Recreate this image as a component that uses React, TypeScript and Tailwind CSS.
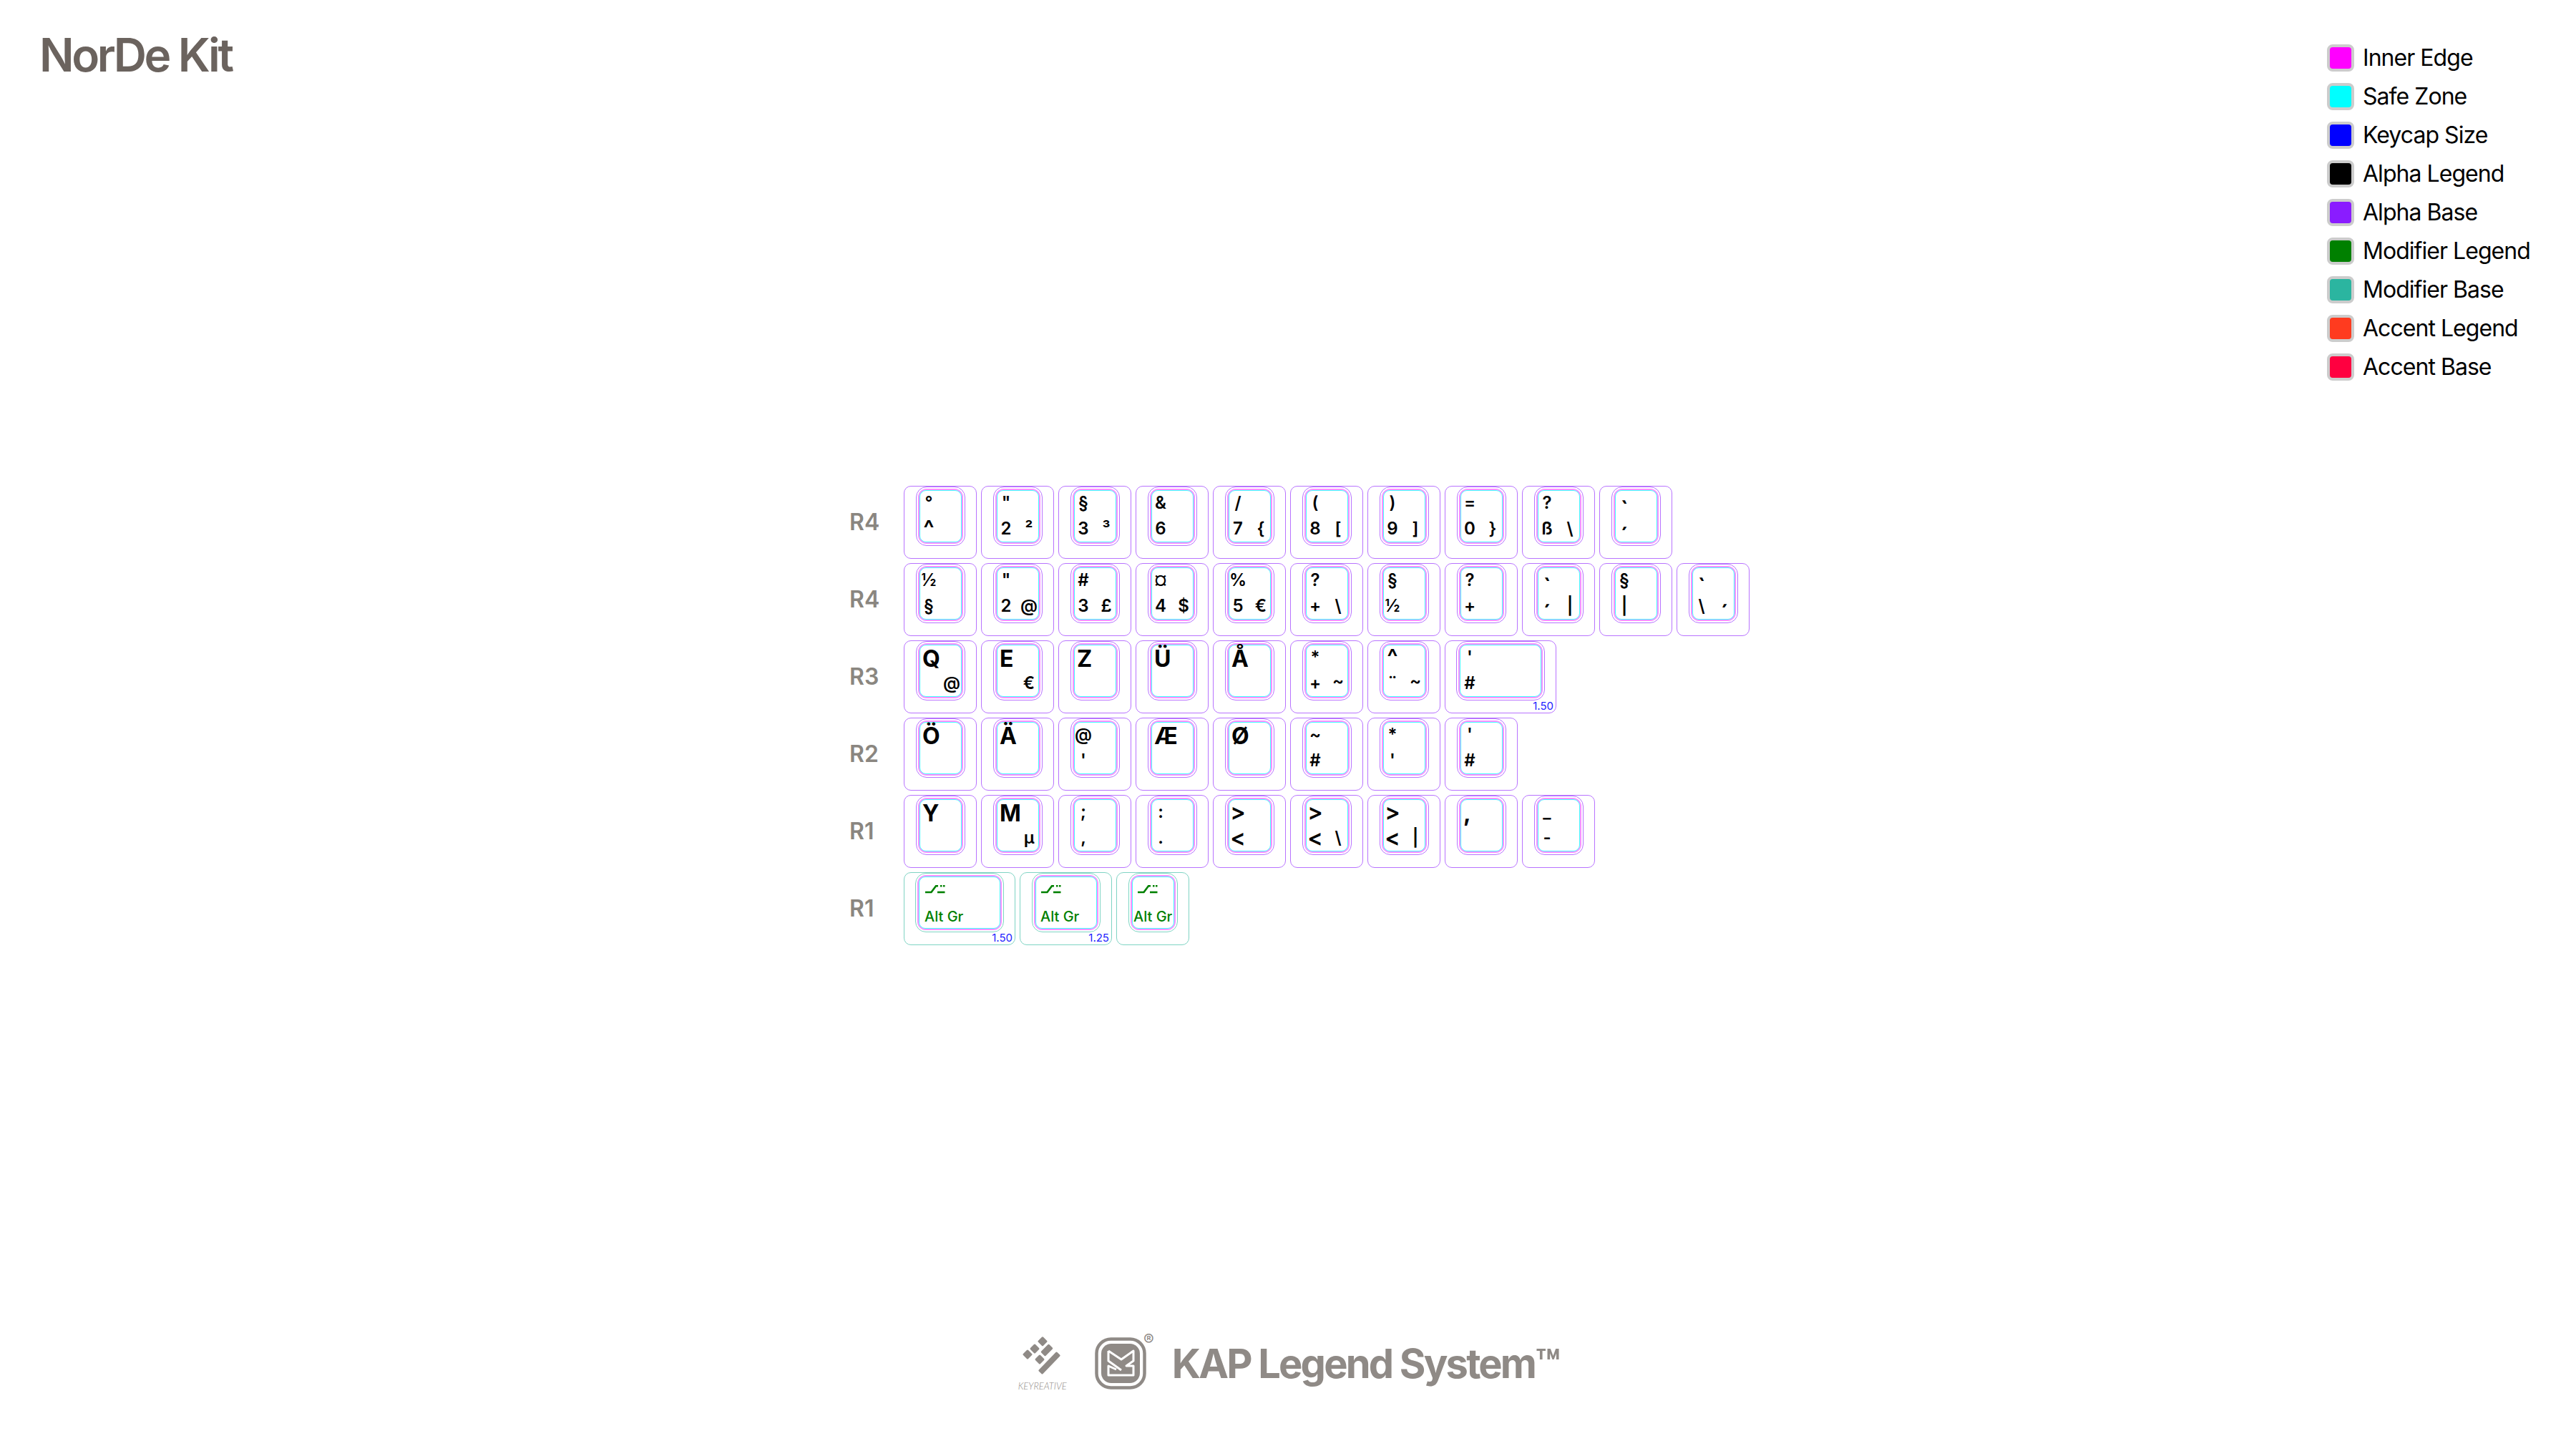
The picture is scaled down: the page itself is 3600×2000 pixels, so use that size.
const LEGEND = [
  { name: "Inner Edge", color: "bg-[#ff00ff]" },
  { name: "Safe Zone", color: "bg-[#00ffff]" },
  { name: "Keycap Size", color: "bg-[#0000ff]" },
  { name: "Alpha Legend", color: "bg-[#000000]" },
  { name: "Alpha Base", color: "bg-[#8a1cff]" },
  { name: "Modifier Legend", color: "bg-[#008000]" },
  { name: "Modifier Base", color: "bg-[#2bb5a0]" },
  { name: "Accent Legend", color: "bg-[#ff3b1f]" },
  { name: "Accent Base", color: "bg-[#ff0040]" },
];

interface KeyDef {
  alpha?: string;
  tl?: string;
  bl?: string;
  tr?: string;
  br?: string;
  size?: "1.50" | "1.25";
  mod?: boolean;
}

const ROWS: { label: string; keys: KeyDef[] }[] = [
  {
    label: "R4",
    keys: [
      { tl: "°", bl: "^" },
      { tl: '"', bl: "2", tr: "²" },
      { tl: "§", bl: "3", tr: "³" },
      { tl: "&", bl: "6" },
      { tl: "/", bl: "7", br: "{" },
      { tl: "(", bl: "8", br: "[" },
      { tl: ")", bl: "9", br: "]" },
      { tl: "=", bl: "0", br: "}" },
      { tl: "?", bl: "ß", br: "\\" },
      { tl: "`", bl: "´" },
    ],
  },
  {
    label: "R4",
    keys: [
      { tl: "½", bl: "§" },
      { tl: '"', bl: "2", br: "@" },
      { tl: "#", bl: "3", br: "£" },
      { tl: "¤", bl: "4", br: "$" },
      { tl: "%", bl: "5", br: "€" },
      { tl: "?", bl: "+", br: "\\" },
      { tl: "§", bl: "½" },
      { tl: "?", bl: "+" },
      { tl: "`", bl: "´", br: "|" },
      { tl: "§", bl: "|" },
      { tl: "`", bl: "\\", br: "´" },
    ],
  },
  {
    label: "R3",
    keys: [
      { alpha: "Q", br: "@" },
      { alpha: "E", br: "€" },
      { alpha: "Z" },
      { alpha: "Ü" },
      { alpha: "Å" },
      { tl: "*", bl: "+", tr: "~" },
      { tl: "^", bl: "¨", tr: "~" },
      { tl: "'", bl: "#", size: "1.50" },
    ],
  },
  {
    label: "R2",
    keys: [
      { alpha: "Ö" },
      { alpha: "Ä" },
      { tl: "@", bl: "'" },
      { alpha: "Æ" },
      { alpha: "Ø" },
      { tl: "~", bl: "#" },
      { tl: "*", bl: "'" },
      { tl: "'", bl: "#" },
    ],
  },
  {
    label: "R1",
    keys: [
      { alpha: "Y" },
      { alpha: "M", br: "µ" },
      { tl: ";", bl: "," },
      { tl: ":", bl: "." },
      { tl: ">", bl: "<" },
      { tl: ">", bl: "<", br: "\\" },
      { tl: ">", bl: "<", br: "|" },
      { alpha: "," },
      { tl: "_", bl: "-" },
    ],
  },
  {
    label: "R1",
    keys: [
      { mod: true, size: "1.50" },
      { mod: true, size: "1.25" },
      { mod: true },
    ],
  },
];

// these glyphs sit larger in the reference than plain 24px Inter
const BIG = ["^", "<", ">", "´", "`"];

function glyphSize(ch: string) {
  return BIG.includes(ch) ? "text-[32px]" : "text-[24px]";
}

function AltGlyph() {
  return (
    <svg width="28" height="13" viewBox="0 0 28 13" fill="none" stroke="#008000" strokeWidth="2.6" className="absolute left-[29px] top-[16px]">
      <path d="M0 11H8.5L15 2.2H18" />
      <path d="M17 11H27.5" />
      <path d="M21 2.2H23.5M25 2.2H27.5" />
    </svg>
  );
}

function Key({ k }: { k: KeyDef }) {
  const outerWidth = k.size === "1.50" ? "w-[156px]" : k.size === "1.25" ? "w-[129px]" : "w-[102px]";
  const capWidth = k.size === "1.50" ? "w-[124px]" : k.size === "1.25" ? "w-[96px]" : "w-[69px]";
  const line = k.mod ? "border-[#7fd4c4]" : "border-[#b873ff]";
  return (
    <div className={`relative shrink-0 h-[102px] ${outerWidth} flex justify-center rounded-[10px] border ${line}`}>
      {/* cap, inner edge and safe zone outlines */}
      <div className={`h-[83px] ${capWidth} rounded-[15px] border ${line} p-[2px]`}>
        <div className="size-full rounded-[12px] border-2 border-[#ff90ff]">
          <div className="size-full rounded-[9px] border border-[#40ffff]" />
        </div>
      </div>

      {k.alpha && <span className="absolute left-[25px] top-[6px] text-[32px] leading-[38px] font-bold text-black">{k.alpha}</span>}
      {k.tl && <span className={`absolute left-[34px] ${k.tl === "`" ? "top-[33px]" : "top-[23px]"} -translate-x-1/2 -translate-y-1/2 ${glyphSize(k.tl)} leading-[20px] font-semibold text-black`}>{k.tl}</span>}
      {k.bl && <span className={`absolute left-[34px] ${k.bl === "´" ? "top-[70px]" : "top-[59px]"} -translate-x-1/2 -translate-y-1/2 ${glyphSize(k.bl)} leading-[20px] font-semibold text-black`}>{k.bl}</span>}
      {k.tr && <span className={`absolute left-[66px] ${k.tr === "~" ? "top-[56px]" : "top-[59px]"} -translate-x-1/2 -translate-y-1/2 text-[24px] leading-[20px] font-semibold text-black`}>{k.tr}</span>}
      {k.br && <span className={`absolute left-[66px] ${k.br === "´" ? "top-[70px]" : "top-[59px]"} -translate-x-1/2 -translate-y-1/2 ${glyphSize(k.br)} leading-[20px] font-semibold text-black`}>{k.br}</span>}

      {k.mod && (
        <>
          <AltGlyph />
          <span className={`absolute top-[49px] text-[20px] leading-[24px] font-medium text-[#008000] ${k.size ? "left-[28px]" : "left-[23px]"}`}>Alt Gr</span>
        </>
      )}
      {k.size && <span className="absolute right-[3px] bottom-0 text-[15px] leading-[18px] text-[#2222ff]">{k.size}</span>}
    </div>
  );
}

function KeyreativeMark() {
  return (
    <svg width="56" height="56" viewBox="0 0 56 56" fill="#8f8a86">
      <rect x="23" y="1.7" width="10" height="10" rx="1.5" transform="rotate(45 28 6.7)" />
      <rect x="12" y="12" width="10" height="10" rx="1.5" transform="rotate(45 17 17)" />
      <rect x="2" y="20" width="10" height="10" rx="1.5" transform="rotate(45 7 25)" />
      <rect x="19" y="27" width="10" height="10" rx="1.5" transform="rotate(45 24 32)" />
      <rect x="26" y="14.5" width="16" height="9" rx="1.5" transform="rotate(-45 34 19)" />
      <rect x="19" y="33" width="37" height="8" rx="1.5" transform="rotate(-46 37.5 37)" />
    </svg>
  );
}

function KapMark() {
  return (
    <svg width="72" height="73" viewBox="0 0 72 73" fill="none">
      <rect x="2.5" y="2.5" width="67" height="68" rx="20" stroke="#8f8a86" strokeWidth="4.5" />
      <rect x="9" y="9" width="54" height="55" rx="14" fill="#8f8a86" />
      <path d="M19 19L37 31L54 19V33L44 40H54V53H19V40L30 45M19 19V33L37 46" stroke="white" strokeWidth="3" strokeLinejoin="round" />
    </svg>
  );
}

export default function App() {
  return (
    <div className="w-[3600px] h-[2000px] bg-white font-['Inter',sans-serif] overflow-hidden">
      {/* Title and colour key */}
      <header className="flex items-start justify-between h-[679px]">
        <h1 className="pl-[55px] pt-[39px] text-[64px] leading-[76px] font-semibold tracking-[-0.053em] text-[#6b635e]">NorDe Kit</h1>
        <ul className="flex flex-col gap-[16px] w-[348px] pt-[62px]">
          {LEGEND.map((item) => (
            <li key={item.name} className="flex items-center gap-[12px] h-[38px]">
              <span className={`size-[38px] rounded-[8px] border-[4px] border-[#cccccc] ${item.color}`} />
              <span className="text-[32px] leading-[38px] tracking-[-0.03em] text-black">{item.name}</span>
            </li>
          ))}
        </ul>
      </header>

      {/* Keyboard rows */}
      <main className="flex flex-col gap-[6px] pl-[1187px]">
        {ROWS.map((row, i) => (
          <div key={i} className="flex items-center">
            <span className="w-[76px] text-[32px] leading-[38px] font-semibold text-[#8a8680]">{row.label}</span>
            <div className="flex gap-[6px]">
              {row.keys.map((k, j) => (
                <Key key={j} k={k} />
              ))}
            </div>
          </div>
        ))}
      </main>

      {/* Brand strip */}
      <footer className="flex items-center justify-center mt-[547px] h-[75px]">
        <div className="flex flex-col items-center w-[70px]">
          <KeyreativeMark />
          <span className="mt-[6px] font-['Lato',sans-serif] text-[13px] leading-[14px] italic font-light text-[#8f8a86] whitespace-nowrap">KEYREATIVE</span>
        </div>
        <div className="relative ml-[38px] mr-[36px]">
          <KapMark />
          <span className="absolute -right-[11px] -top-[10px] text-[22px] leading-[26px] text-[#8f8a86]">®</span>
        </div>
        <span className="text-[56px] leading-[66px] font-bold tracking-[-0.05em] text-[#8f8a86] whitespace-nowrap">KAP Legend System™</span>
      </footer>
    </div>
  );
}
